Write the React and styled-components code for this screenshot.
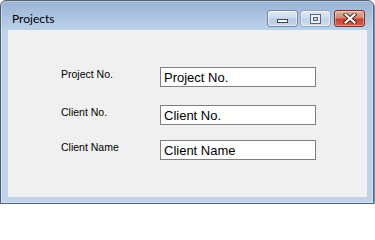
import React from 'react'
import styled, { createGlobalStyle } from 'styled-components'

const Global = createGlobalStyle`
  html, body {
    margin: 0;
    padding: 0;
    background: #ffffff;
  }
`;

const Window = styled.div`
  box-sizing: border-box;
  width: 374px;
  height: 204px;
  display: flex;
  flex-direction: column;
  border: 1px solid #55606e;
  border-radius: 6px 6px 0 0;
  background: linear-gradient(to bottom, #98b2d2 0px, #aec6e2 18px, #bad1ea 29px, #bfd4eb 29px);
  box-shadow: 1px 1px 0 #36b8dc, inset 0 0 0 1px rgba(255, 255, 255, 0.35);
  font-family: "Liberation Sans", Arial, sans-serif;
`;

const TitleBar = styled.div`
  height: 29px;
  flex: none;
  display: flex;
  align-items: flex-start;
  justify-content: space-between;
  padding: 0 8px 0 11px;
`;

const Caption = styled.div`
  font-family: Lato, "Noto Sans", sans-serif;
  font-size: 12px;
  line-height: 16px;
  padding-top: 10px;
  color: #000;
`;

const Controls = styled.div`
  display: flex;
  padding-top: 9px;
`;

const CapButton = styled.div`
  box-sizing: border-box;
  width: 31px;
  height: 17px;
  margin-left: ${p => p.$gap || 0}px;
  display: flex;
  align-items: center;
  justify-content: center;
  border-radius: 3px;
  border: 1px solid ${p => p.$close ? '#7a3226' : p.$faded ? '#93a6bf' : '#7388a4'};
  background: ${p => p.$close
    ? 'linear-gradient(to bottom, #e9ad9e 0%, #dc8571 45%, #c8412f 55%, #d5604c 100%)'
    : p.$faded
      ? 'linear-gradient(to bottom, #dfe8f3 0%, #cfdcec 45%, #c2d3e7 55%, #cfddee 100%)'
      : 'linear-gradient(to bottom, #e3ebf5 0%, #ccdaeb 45%, #b6cae2 55%, #c6d7eb 100%)'};
  box-shadow: inset 0 0 0 1px rgba(255, 255, 255, ${p => p.$close ? 0.35 : 0.55});
`;

const Client = styled.div`
  flex: 1;
  margin: 0 6px 6px 7px;
  background: #f0f0f0;
  padding: 37px 0 0 53px;
`;

const Row = styled.div`
  display: flex;
  align-items: flex-start;
  margin-bottom: ${p => p.$space}px;
`;

const Label = styled.div`
  width: 99px;
  font-size: 10.5px;
  line-height: 13px;
  padding-top: 1px;
  color: #000;
`;

const Field = styled.input`
  box-sizing: border-box;
  width: 156px;
  height: 20px;
  margin: 0;
  padding: 0 0 0 3px;
  border: 1px solid #7f7f7f;
  border-radius: 0;
  background: #fff;
  font-family: "Liberation Sans", Arial, sans-serif;
  font-size: 13px;
  line-height: 18px;
  color: #000;
  outline: none;
`;

const MinGlyph = () => (
  <svg width="13" height="15" viewBox="0 0 13 15">
    <rect x="1.5" y="8.5" width="10" height="3" fill="#fff" stroke="#3c4a5c" />
  </svg>
);

const MaxGlyph = () => (
  <svg width="11" height="10" viewBox="0 0 11 10">
    <rect x="0.5" y="0.5" width="10" height="9" fill="#e9eff7" stroke="#56667c" />
    <rect x="3.5" y="3.5" width="4" height="3" fill="#c8d5e6" stroke="#56667c" />
  </svg>
);

const CloseGlyph = () => (
  <svg width="14" height="11" viewBox="0 0 14 11">
    <path d="M2.5 1.5 L11.5 9.5 M11.5 1.5 L2.5 9.5" stroke="#5a2a22" strokeWidth="4" strokeLinecap="square" />
    <path d="M2.5 1.5 L11.5 9.5 M11.5 1.5 L2.5 9.5" stroke="#fff" strokeWidth="2" strokeLinecap="square" />
  </svg>
);

const fields = [
  { label: 'Project No.', value: 'Project No.', space: 18 },
  { label: 'Client No.', value: 'Client No.', space: 15 },
  { label: 'Client Name', value: 'Client Name', space: 0 },
];

const App = () => {
  return (
    <>
      <Global />
      <Window>
        <TitleBar>
          <Caption>Projects</Caption>
          <Controls>
            <CapButton><MinGlyph /></CapButton>
            <CapButton $gap={2} $faded><MaxGlyph /></CapButton>
            <CapButton $gap={3} $close><CloseGlyph /></CapButton>
          </Controls>
        </TitleBar>
        <Client>
          {fields.map(f => (
            <Row key={f.label} $space={f.space}>
              <Label>{f.label}</Label>
              <Field defaultValue={f.value} readOnly />
            </Row>
          ))}
        </Client>
      </Window>
    </>
  )
}

export default App;
